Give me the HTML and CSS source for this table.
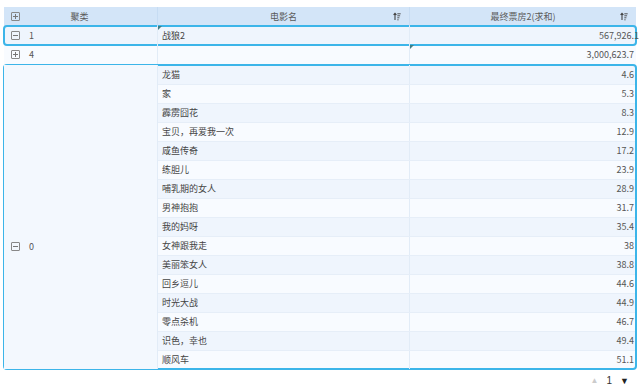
FILE: index.html
```html
<!DOCTYPE html>
<html>
<head>
<meta charset="utf-8">
<link rel="stylesheet" href="styles.css">
</head>
<body>
<div class="table">
  <div class="row head">
    <div class="cell c1"><span class="box plus"></span><span class="htext">聚类</span></div>
    <div class="cell c2"><span class="htext">电影名</span><svg class="sort" viewBox="0 0 8 8"><path d="M2 7.5V1M0.6 2.4L2 0.8 3.4 2.4" stroke="#444" stroke-width="1.1" fill="none"/><path d="M4.3 1.3h3.4M4.3 3.3h2.8M4.3 5.3h2.1M4.3 7.3h1.3" stroke="#444" stroke-width="0.9"/></svg></div>
    <div class="cell c3"><span class="htext">最终票房2(求和)</span><svg class="sort" viewBox="0 0 8 8"><path d="M2 7.5V1M0.6 2.4L2 0.8 3.4 2.4" stroke="#444" stroke-width="1.1" fill="none"/><path d="M4.3 1.3h3.4M4.3 3.3h2.8M4.3 5.3h2.1M4.3 7.3h1.3" stroke="#444" stroke-width="0.9"/></svg></div>
  </div>
  <div class="row r-a sel">
    <div class="cell c1"><span class="box minus"></span><span class="key">1</span></div>
    <div class="cell c2 mark">战狼2</div>
    <div class="cell c3 num tight">567,926.1</div>
  </div>
  <div class="row r-b">
    <div class="cell c1"><span class="box plus"></span><span class="key">4</span></div>
    <div class="cell c2"></div>
    <div class="cell c3 num mark">3,000,623.7</div>
  </div>
  <div class="group sel">
    <div class="cell c1 gcell"><span class="box minus"></span><span class="key">0</span></div>
    <div class="sub">
      <div class="srow r-a"><div class="cell c2">龙猫</div><div class="cell c3 num">4.6</div></div>
      <div class="srow r-b"><div class="cell c2">家</div><div class="cell c3 num">5.3</div></div>
      <div class="srow r-a"><div class="cell c2">霹雳囧花</div><div class="cell c3 num">8.3</div></div>
      <div class="srow r-b"><div class="cell c2">宝贝，再爱我一次</div><div class="cell c3 num">12.9</div></div>
      <div class="srow r-a"><div class="cell c2">咸鱼传奇</div><div class="cell c3 num">17.2</div></div>
      <div class="srow r-b"><div class="cell c2">练胆儿</div><div class="cell c3 num">23.9</div></div>
      <div class="srow r-a"><div class="cell c2">哺乳期的女人</div><div class="cell c3 num">28.9</div></div>
      <div class="srow r-b"><div class="cell c2">男神抱抱</div><div class="cell c3 num">31.7</div></div>
      <div class="srow r-a"><div class="cell c2">我的妈呀</div><div class="cell c3 num">35.4</div></div>
      <div class="srow r-b"><div class="cell c2">女神跟我走</div><div class="cell c3 num">38</div></div>
      <div class="srow r-a"><div class="cell c2">美丽笨女人</div><div class="cell c3 num">38.8</div></div>
      <div class="srow r-b"><div class="cell c2">回乡逗儿</div><div class="cell c3 num">44.6</div></div>
      <div class="srow r-a"><div class="cell c2">时光大战</div><div class="cell c3 num">44.9</div></div>
      <div class="srow r-b"><div class="cell c2">零点杀机</div><div class="cell c3 num">46.7</div></div>
      <div class="srow r-a"><div class="cell c2">识色，幸也</div><div class="cell c3 num">49.4</div></div>
      <div class="srow r-b"><div class="cell c2">顺风车</div><div class="cell c3 num">51.1</div></div>
    </div>
  </div>
</div>
<div class="pager"><span class="up">▲</span><span class="pg">1</span><span class="down">▼</span></div>
</body>
</html>
```

FILE: styles.css
```css
html, body { margin: 0; padding: 0; background: #fff; }
body {
  font-family: "Noto Sans CJK SC", "Liberation Sans", sans-serif;
  font-size: 9px;
  color: #555;
  width: 640px;
  height: 384px;
  overflow: hidden;
}
.table {
  margin: 7px 4px 0 4px;
  width: 632px;
}
.row {
  display: grid;
  grid-template-columns: 154px 252px 226px;
  height: 19px;
}
.cell {
  display: flex;
  align-items: center;
  padding: 0 4px;
  box-sizing: border-box;
  position: relative;
  white-space: nowrap;
  overflow: hidden;
  line-height: 19px;
}
.head { background: #d3e5f8; height: 19px; }
.head .cell { justify-content: center; }
.head .c1, .head .c2 { border-right: 1px solid #c6dcf3; }
.head .c1 { justify-content: flex-start; }
.head .c1 .htext { flex: 1; text-align: center; padding-right: 14px; }
.htext { color: #5a5a5a; }
.sort { position: absolute; right: 8px; top: 5px; width: 8px; height: 9px; }
.r-a { background: #eff5fd; }
.r-b { background: #f8fbff; }
.c1 { border-right: 1px solid #e2ecf7; }
.c2 { border-right: 1px solid #e2ecf7; color: #444; }
.num { justify-content: flex-end; color: #555; padding-right: 2px; }
.tight { padding-right: 0; margin-right: -3px; }
.key { margin-left: 9px; color: #555; }
.box {
  width: 9px; height: 9px;
  border: 1px solid #888;
  box-sizing: border-box;
  position: relative;
  margin-left: 3px;
  flex: none;
  border-radius: 1px;
}
.box::before {
  content: "";
  position: absolute;
  left: 1px; right: 1px; top: 3px; height: 1px;
  background: #777;
}
.plus::after {
  content: "";
  position: absolute;
  top: 1px; bottom: 1px; left: 3px; width: 1px;
  background: #777;
}
.sel {
  outline: 2px solid #3cb5e9;
  outline-offset: -1px;
  border-radius: 3px;
}
.mark::before {
  content: "";
  position: absolute;
  left: 0; top: 0;
  border-top: 4px solid #3f7f86;
  border-right: 4px solid transparent;
}
.group {
  display: grid;
  grid-template-columns: 154px 478px;
  margin-top: 1px;
}
.gcell {
  background: #f3f8fe;
  align-items: flex-start;
  padding-top: 172px;
}
.sub { display: flex; flex-direction: column; }
.srow {
  display: grid;
  grid-template-columns: 252px 226px;
  height: 19px;
}
.srow + .srow { border-top: 1px solid #e6eef8; height: 18px; }
.srow .cell { line-height: 18px; }
.gcell .box { margin-top: 5px; }
.pager {
  display: flex;
  justify-content: flex-end;
  align-items: center;
  gap: 8px;
  padding-right: 11px;
  margin-top: 6px;
  font-family: "Liberation Sans", sans-serif;
  font-size: 10px;
  color: #333;
}
.up { color: #ccc; font-size: 8px; }
.down { color: #222; font-size: 9px; }
```
